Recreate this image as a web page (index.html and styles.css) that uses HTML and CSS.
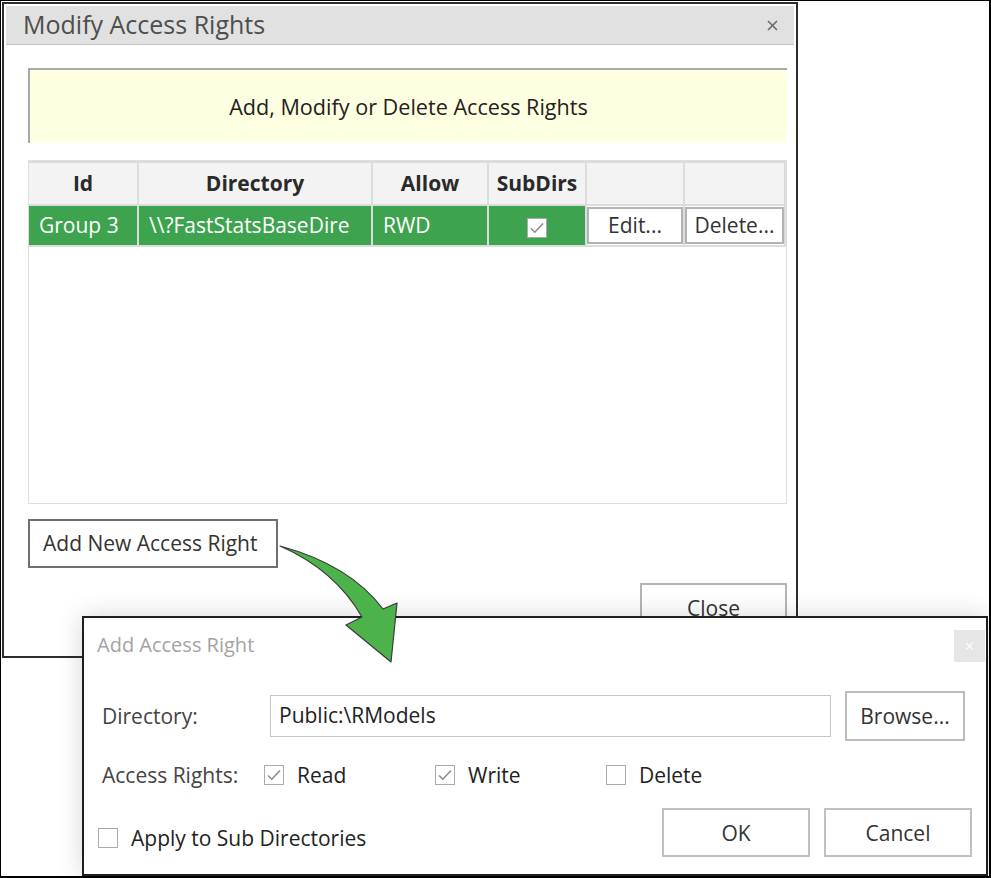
FILE: index.html
```html
<!DOCTYPE html>
<html lang="en">
<head>
    <meta charset="UTF-8">
    <title>Modify Access Rights</title>
    <link rel="stylesheet" href="styles.css">
</head>
<body>
    <div class="screen">
        <div class="dialog-main">
            <div class="titlebar">
                <span class="title">Modify Access Rights</span>
                <svg class="close-x" width="11" height="11" viewBox="0 0 11 11"><path d="M1 1L10 10M10 1L1 10" stroke="#6a6a6a" stroke-width="1.6"/></svg>
            </div>
            <div class="main-body">
                <div class="banner">Add, Modify or Delete Access Rights</div>

                <div class="grid">
                    <table>
                        <colgroup>
                            <col style="width:109px">
                            <col style="width:234px">
                            <col style="width:116px">
                            <col style="width:98px">
                            <col style="width:98px">
                            <col>
                        </colgroup>
                        <thead>
                            <tr>
                                <th>Id</th>
                                <th>Directory</th>
                                <th>Allow</th>
                                <th>SubDirs</th>
                                <th></th>
                                <th></th>
                            </tr>
                        </thead>
                        <tbody>
                            <tr class="selected">
                                <td>Group 3</td>
                                <td>\\?FastStatsBaseDire</td>
                                <td>RWD</td>
                                <td class="center"><span class="check checked"><svg width="18" height="18" viewBox="0 0 18 18"><path d="M3 9.5L6.8 13.2L15 4.5" fill="none" stroke="#8c8c8c" stroke-width="1.6"/></svg></span></td>
                                <td class="btn-cell"><div class="cell-btn">Edit...</div></td>
                                <td class="btn-cell"><div class="cell-btn">Delete...</div></td>
                            </tr>
                        </tbody>
                    </table>
                </div>

                <button class="btn add-btn">Add New Access Right</button>
                <button class="btn close-btn">Close</button>
            </div>
        </div>

        <div class="dialog-add">
            <div class="add-head">
                <span class="add-title">Add Access Right</span>
                <span class="add-close">×</span>
            </div>

            <div class="row dir-row">
                <span class="lbl lbl-dir">Directory:</span>
                <div class="input">Public:\RModels</div>
                <button class="btn browse-btn">Browse...</button>
            </div>

            <div class="row rights-row">
                <span class="lbl lbl-rights">Access Rights:</span>
                <label class="opt"><span class="check checked"><svg width="18" height="18" viewBox="0 0 18 18"><path d="M3 9.5L6.8 13.2L15 4.5" fill="none" stroke="#8c8c8c" stroke-width="1.6"/></svg></span>Read</label>
                <label class="opt"><span class="check checked"><svg width="18" height="18" viewBox="0 0 18 18"><path d="M3 9.5L6.8 13.2L15 4.5" fill="none" stroke="#8c8c8c" stroke-width="1.6"/></svg></span>Write</label>
                <label class="opt"><span class="check"></span>Delete</label>
            </div>

            <div class="row foot-row">
                <label class="opt sub-opt"><span class="check"></span>Apply to Sub Directories</label>
                <button class="btn dlg-btn">OK</button>
                <button class="btn dlg-btn">Cancel</button>
            </div>
        </div>

        <!-- callout arrow from the add button to the new dialog -->
        <svg class="arrow" width="130" height="130" viewBox="0 0 130 130">
            <path d="M4 5Q74 24 107 68L121 62L115 121L70 84L86 76Q59 29 4 5Z" fill="#4cb34b" stroke="#3a3a3a" stroke-width="1.2" stroke-linejoin="round"/>
        </svg>
    </div>
</body>
</html>
```

FILE: styles.css
```css
body {
    margin: 0;
    font-family: "Open Sans", "Noto Sans", sans-serif;
    background: #fff;
    color: #333;
}

.screen {
    position: relative;
    width: 991px;
    height: 878px;
    box-sizing: border-box;
    border: 1px solid #000;
    border-right-width: 2px;
    border-bottom-width: 2px;
    overflow: hidden;
    background: #fff;
}

/* main dialog */
.dialog-main {
    box-sizing: border-box;
    width: 796px;
    height: 656px;
    margin: 1px 0 0 1px;
    border: 2px solid #2d2d2d;
    padding: 2px;
    display: flex;
    flex-direction: column;
}

.titlebar {
    height: 38px;
    background: #e1e1e1;
    border-bottom: 1px solid #c4c4c4;
    display: flex;
    align-items: center;
    justify-content: space-between;
    padding: 0 16px 0 17px;
}

.title {
    font-size: 25px;
    color: #4e4e4e;
    margin-top: -3px;
}

.main-body {
    flex: 1;
    display: flex;
    flex-direction: column;
    padding: 23px 7px 0 22px;
}

.banner {
    height: 75px;
    box-sizing: border-box;
    border-top: 2px solid #a8a8a8;
    border-left: 2px solid #a8a8a8;
    background: #ffffe1;
    display: flex;
    align-items: center;
    justify-content: center;
    font-size: 21.6px;
    color: #222;
}

.grid {
    margin-top: 17px;
    height: 344px;
    box-sizing: border-box;
    border: 1px solid #dedede;
}

.grid table {
    width: 100%;
    border-collapse: collapse;
    table-layout: fixed;
}

.grid th,
.grid td {
    border: 2px solid #dcdcdc;
    font-size: 21px;
    white-space: nowrap;
    overflow: hidden;
}

.grid th {
    height: 39px;
    background: #f3f3f3;
    font-weight: 700;
    color: #2a2a2a;
    padding: 0 0 2px;
}

.grid td {
    height: 37px;
    padding: 0 10px 2px;
}

.grid th:first-child,
.grid td:first-child {
    border-left: none;
}

.selected td {
    background: #3ea34f;
    color: #fff;
}

.selected td.btn-cell {
    background: #fff;
    padding: 0;
}

.grid td.center {
    text-align: center;
    padding: 0;
}

.cell-btn {
    height: 37px;
    box-sizing: border-box;
    border: 2px solid #b3b3b3;
    display: flex;
    align-items: center;
    justify-content: center;
    padding-bottom: 2px;
    color: #333;
}

.check {
    display: inline-flex;
    align-items: center;
    justify-content: center;
    width: 20px;
    height: 20px;
    box-sizing: border-box;
    border: 1px solid #ababab;
    background: #fff;
    vertical-align: middle;
}

.check svg {
    display: block;
}

.btn {
    font-family: inherit;
    font-size: 21px;
    color: #333;
    background: #fff;
    box-sizing: border-box;
    cursor: pointer;
}

.add-btn {
    align-self: flex-start;
    margin-top: 15px;
    width: 250px;
    height: 49px;
    border: 2px solid #6f6f6f;
    text-align: left;
    padding: 0 0 2px 13px;
}

.close-btn {
    align-self: flex-end;
    margin-top: 15px;
    width: 147px;
    height: 49px;
    border: 2px solid #b5b5b5;
}

/* add access right dialog */
.dialog-add {
    position: absolute;
    left: 81px;
    top: 615px;
    width: 906px;
    height: 260px;
    box-sizing: border-box;
    border: 2px solid #1f1f1f;
    background: #fff;
    box-shadow: 0 0 24px rgba(0, 0, 0, 0.16);
    z-index: 1;
}

.add-head {
    display: flex;
    align-items: center;
    justify-content: space-between;
    padding: 12px 1px 0 13px;
}

.add-title {
    font-size: 20px;
    color: #a3a3a3;
    margin-top: -4px;
}

.add-close {
    width: 31px;
    height: 32px;
    background: #e6e6e6;
    color: #fff;
    display: flex;
    align-items: center;
    justify-content: center;
    font-size: 16px;
}

.row {
    display: flex;
    align-items: center;
    font-size: 21px;
    color: #444;
}

.dir-row {
    margin-top: 29px;
    padding-left: 18px;
}

.lbl-dir {
    width: 168px;
}

.input {
    width: 561px;
    height: 42px;
    box-sizing: border-box;
    border: 1px solid #c6c6c6;
    display: flex;
    align-items: center;
    padding: 0 0 2px 8px;
    color: #222;
}

.browse-btn {
    margin-left: 14px;
    width: 120px;
    height: 50px;
    border: 2px solid #bcbcbc;
}

.rights-row {
    margin-top: 22px;
    padding-left: 18px;
    height: 24px;
}

.lbl-rights {
    width: 162px;
}

.opt {
    display: flex;
    align-items: center;
    gap: 13px;
    width: 171px;
    color: #222;
}

.foot-row {
    margin-top: 21px;
    padding: 0 14px;
}

.sub-opt {
    width: auto;
    margin-right: auto;
    margin-top: 10px;
}

.dlg-btn {
    width: 148px;
    height: 49px;
    border: 2px solid #c0c0c0;
    margin-left: 14px;
}

.arrow {
    position: absolute;
    left: 275px;
    top: 540px;
    z-index: 2;
    pointer-events: none;
}
```
